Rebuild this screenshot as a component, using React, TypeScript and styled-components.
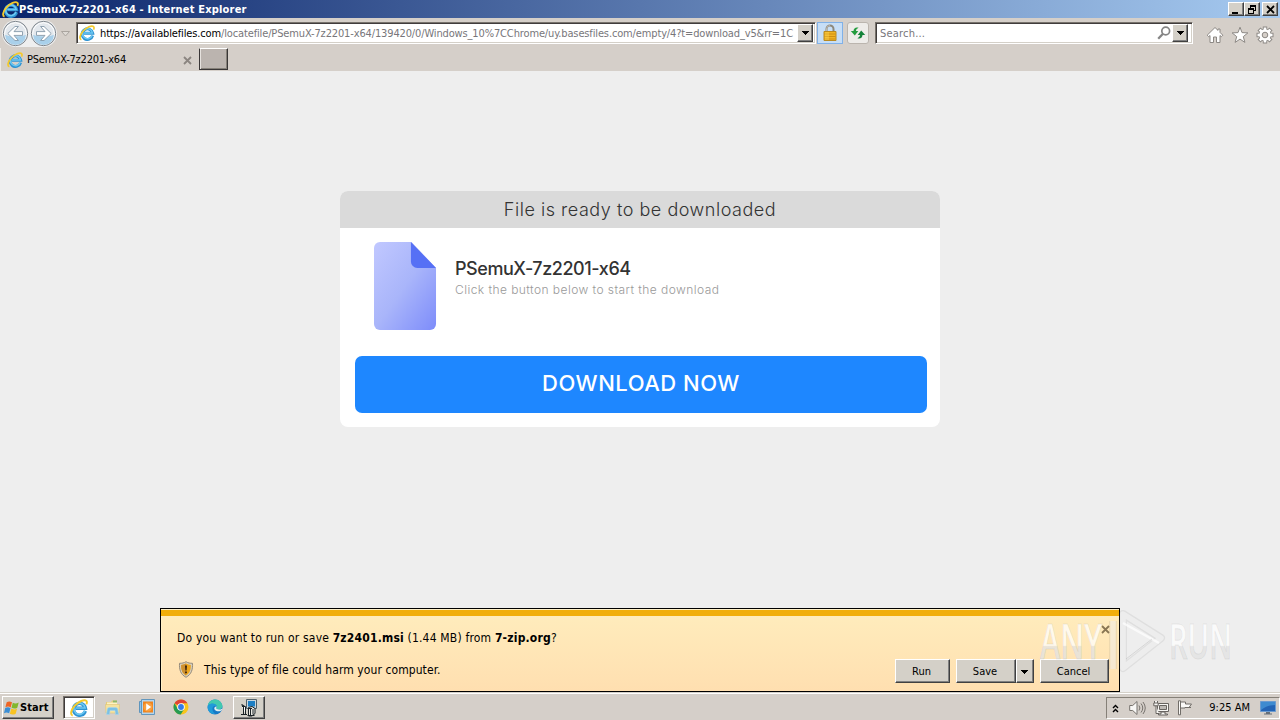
import type { ReactNode } from "react";
import styled, { createGlobalStyle, css } from "styled-components";

const theme = {
    face: "#d5cfc9",
    page: "#eeeeee",
    ui: `"DejaVu Sans Condensed", "DejaVu Sans", sans-serif`,
    web: `Inter, "Open Sans", sans-serif`,
};

const raised = css`
    border: 1px solid;
    border-color: #fff #404040 #404040 #fff;
    box-shadow: inset -1px -1px 0 #808080;
    background: #d4d0c8;
`;

const sunken = css`
    border: 1px solid;
    border-color: #77726c #fff #fff #77726c;
    box-shadow: inset 1px 1px 0 #403c3c, inset -1px -1px 0 #d4d0c8;
    background: #fff;
`;

const IeIcon = ({ size = 16 }: { size?: number }) => (
    <svg width={size} height={size} viewBox="0 0 16 16" fill="none">
        <path d="M13.6 10.6A5.3 5.3 0 1 1 13.7 8.2H5" stroke="#2f93d2" strokeWidth="3" />
        <path d="M13.2 10.2A5 5 0 1 1 13.4 8H5" stroke="#6cc8f2" strokeWidth="1.5" />
        <path d="M2.4 14.8C0 14 .8 9.900 4 6.200 7.600 2.100 12.800 0 14.600 1.700c.7.8.4 2-.1 3" stroke="#f4c92c" strokeWidth="1.700" />
    </svg>
);

const NavIcon = ({ back }: { back?: boolean }) => (
    <svg width="27" height="27" viewBox="0 0 27 27" fill="none">
        <circle cx="13.5" cy="13.5" r="12.2" fill="#e3e8ed" stroke="#7f868d" />
        <circle cx="13.5" cy="13.5" r="10.8" stroke="#fff" />
        <path d="M3 14.500a10.500 10.500 0 0 0 21 0c-3 2.500-18 2.500-21 0Z" fill="#a9d0ea" />
        <g transform={back ? undefined : "rotate(180 13.500 13.500)"}>
            <path
                d="M5.800 13.500 13 6.500h3.400L12 11.600h8.500v3.800H12l4.400 5.100H13Z"
                fill="#fff"
                stroke="#8599a9"
                strokeWidth=".9"
            />
        </g>
    </svg>
);

const LockIcon = () => (
    <svg width="14" height="18" viewBox="0 0 14 18">
        <path d="M3.500 8V5a3.500 3.500 0 0 1 7 0v3" fill="none" stroke="#8d887b" strokeWidth="2" />
        <path d="M3.500 8V5A3.500 3.500 0 0 1 7 1.500" fill="none" stroke="#d2cfc7" strokeWidth=".7" />
        <path d="M1 7.500h12v9H1z" fill="#f0b423" stroke="#b98a20" />
        <path d="M1.500 10h11M1.500 12.500h11M1.500 15h11" stroke="#cf8e14" />
        <path d="M3 8v8M5 8v8" stroke="#ffdc60" opacity=".7" />
    </svg>
);

const RefreshIcon = () => (
    <svg width="16" height="16" viewBox="0 0 16 16" fill="#249c3e">
        <path d="M8.6 2.8C6 1.8 3.7 3 3.5 6H.8l4 4.600L8.300 6H6c.1-1.500.8-2.400 2.600-3.200Z" />
        <path d="M7.400 13.200c2.600 1 4.900-.2 5.100-3.200h2.700l-4-4.600L7.700 10H10c-.1 1.500-.8 2.400-2.600 3.200Z" fill="#15833a" />
    </svg>
);

const SearchIcon = () => (
    <svg width="14" height="14" viewBox="0 0 14 14" fill="none" stroke="#858585">
        <circle cx="8.700" cy="5" r="3.900" strokeWidth="1.700" />
        <path d="m6 7.800-4.800 5" strokeWidth="2.300" />
    </svg>
);

const outline = { fill: "#fff", stroke: "#8c8884", strokeWidth: 1 };

const HomeIcon = () => (
    <svg width="18" height="18" viewBox="0 0 18 18" {...outline}>
        <path d="M9 1.500 1.200 9.200l1.500 1.500L4 9.500v7h3.500V11h3v5.500H14v-7l1.300 1.200 1.500-1.500-2.800-2.800V3h-2v1.400Z" />
    </svg>
);

const StarIcon = () => (
    <svg width="18" height="18" viewBox="0 0 18 18" {...outline}>
        <path d="m9 1.200 2 5.400 5.900.3-4.600 3.700 1.600 5.800L9 13.100l-4.900 3.300 1.600-5.800L1.100 6.900 7 6.600Z" />
    </svg>
);

const GearIcon = () => (
    <svg width="18" height="18" viewBox="0 0 18 18" fill="none">
        {[0, 45, 90, 135].map((angle) => (
            <path key={angle} d="M9 .5v17" stroke="#8c8884" strokeWidth="4.400" transform={`rotate(${angle} 9 9)`} />
        ))}
        <circle cx="9" cy="9" r="6.500" fill="#8c8884" />
        {[0, 45, 90, 135].map((angle) => (
            <path key={angle} d="M9 1.500v15" stroke="#fff" strokeWidth="2.600" transform={`rotate(${angle} 9 9)`} />
        ))}
        <circle cx="9" cy="9" r="5.700" fill="#fff" />
        <circle cx="9" cy="9" r="2.800" fill="#d5cfc9" stroke="#8c8884" />
    </svg>
);

const CloseGlyph = ({ color = "#8b8580", size = 9 }: { color?: string; size?: number }) => (
    <svg width={size} height={size} viewBox="0 0 9 9" stroke={color} strokeWidth="1.800">
        <path d="m1 1 7 7M8 1 1 8" />
    </svg>
);

const DownArrow = () => (
    <svg width="7" height="4" viewBox="0 0 7 4" shapeRendering="crispEdges">
        <path d="M0 0h7v1H0zM1 1h5v1H1zM2 2h3v1H2zM3 3h1v1H3z" />
    </svg>
);

const FileIcon = () => (
    <svg width="63" height="88" viewBox="0 0 64 88" preserveAspectRatio="none">
        <defs>
            <linearGradient id="sheet" x1="0" y1="0" x2="1" y2="1">
                <stop offset="0" stopColor="#c1c8ff" />
                <stop offset=".5" stopColor="#a9b5fa" />
                <stop offset="1" stopColor="#7d8cfa" />
            </linearGradient>
        </defs>
        <path d="M6 0h32l25 26v56a6 6 0 0 1-6 6H6a6 6 0 0 1-6-6V6a6 6 0 0 1 6-6Z" fill="url(#sheet)" />
        <path d="M37.500 0 63 26H44a6.500 6.500 0 0 1-6.500-6.500Z" fill="#5670f5" />
    </svg>
);

const ShieldIcon = () => (
    <svg width="16" height="17" viewBox="0 0 16 17">
        <path d="M8 .7c2 1.300 4 1.600 6.500 1.600.3 6.500-1 11-6.500 14C2.500 13.300 1.200 8.800 1.500 2.300 4 2.300 6 2 8 .7Z" fill="#d8cfbc" stroke="#958b7b" />
        <path d="M8 2.600c1.600.9 3 1.300 4.800 1.300.1 5-1 8-4.800 10.500C4.200 11.900 3.100 8.900 3.200 3.900 5 3.900 6.400 3.500 8 2.600Z" fill="#eda51b" />
        <path d="M8 2.600c-1.600.9-3 1.300-4.800 1.300-.1 5 1 8 4.800 10.500Z" fill="#cf9130" />
        <path d="M7 4.500h2L8.600 9.500H7.400ZM7.100 10.500h1.800v1.800H7.100z" fill="#38210b" />
    </svg>
);

const WindowsIcon = () => (
    <svg width="16" height="16" viewBox="0 0 16 16">
        <path d="M2.700 2.200C4.600 1 6.200 1.200 8 2.300L6.700 7.400C5 6.300 3.300 6.300 1.400 7.300Z" fill="#ee6525" />
        <path d="M8.800 2.700c1.800 1.100 3.600 1.100 5.900-.2l-1.400 5.200c-2 1.200-3.800 1.200-5.800.1Z" fill="#82b72d" />
        <path d="M1.200 8.100c1.900-1 3.600-1 5.300.1l-1.400 5.100C3.400 12.200 1.800 12.200 0 13.200Z" fill="#3b8ed5" />
        <path d="M7.300 8.600c2 1.100 3.800 1.100 5.800-.1l-1.400 5.200c-2 1.200-3.800 1.200-5.800.1Z" fill="#f8c321" />
    </svg>
);

const ExplorerIcon = () => (
    <svg width="17" height="16" viewBox="0 0 17 16">
        <path d="M2 3h5l1-1.500h5V13H2Z" fill="#e3cc7c" />
        <path d="M9 1.500h4v3H9z" fill="#8fb86b" />
        <path d="M3 3.500h10v3H3z" fill="#fff3c2" />
        <path d="M1.500 5.500h14l-.5 8.500H2Z" fill="#f5e3a0" stroke="#dfc273" strokeWidth=".6" />
        <path d="M2.500 15.500 3.300 10q.2-1.500 2-1.500h6.400q1.800 0 2 1.500l.8 5.500h-3l-.5-4H6l-.5 4Z" fill="#7cc0e4" stroke="#a8d7ee" strokeWidth=".6" />
    </svg>
);

const PlayerIcon = () => (
    <svg width="16" height="16" viewBox="0 0 16 16">
        <path d="M.5 2.500h3v11h-3z" fill="#8fc3ea" stroke="#5e95bd" />
        <path d="M2.500.5h13v15h-13z" fill="#b5d5ed" stroke="#6397bd" />
        <path d="M4 2.500h10v11H4z" fill="#f0841d" />
        <circle cx="9" cy="8" r="4.500" fill="#f9a040" />
        <path d="m7.200 4.600 5 3.400-5 3.400Z" fill="#fff" />
    </svg>
);

const ChromeIcon = () => (
    <svg width="16" height="16" viewBox="0 0 16 16">
        <circle cx="8" cy="8" r="7.500" fill="#f8c51c" />
        <path d="M8 8 1.500 4.200A7.500 7.500 0 0 1 14.500 4.300H8Z" fill="#df4435" />
        <path d="M1.500 4.200A7.500 7.500 0 0 0 7.700 15.500L11.200 9.900 8 8 4.800 9.900Z" fill="#269b53" />
        <circle cx="8" cy="8" r="3.800" fill="#fff" />
        <circle cx="8" cy="8" r="2.900" fill="#337ce8" />
    </svg>
);

const EdgeIcon = () => (
    <svg width="16" height="16" viewBox="0 0 16 16">
        <circle cx="8" cy="8" r="7.500" fill="#1679c6" />
        <path d="M.8 6.800C2-.8 12.800-1.800 15.300 6c.8 3.800-2.500 5.500-5.800 4-1-.5.500-1 .3-2.400C9.400 4.200 3.400 3.600.8 6.800Z" fill="#42c9b0" />
        <path d="M1 6.500C4 3.400 9.200 4.400 9.800 7.500 5.400 5.500 3.600 11 8 14.900 3 15.800-.3 11 1 6.500Z" fill="#209bd9" />
        <path d="M9.700 7.500c-.2 1.400-.9 1.700-.2 2.300 1.500 1.200 4.100.9 5.300-.1l.3 1c-1.800 2-5.200 2.200-7.200.2-1.300-1.600-.3-3.400 1.800-3.400Z" fill="#e1eeef" />
    </svg>
);

const InstallerIcon = () => (
    <svg width="18" height="18" viewBox="0 0 18 18" fill="none" stroke="#1b2226">
        <path d="M6.500.5h10v9h-10z" fill="#c9d6dd" stroke="#50606a" />
        <path d="M8 2h7v5.500H8z" fill="#1d7fc4" stroke="none" />
        <path d="M2 7.500h3.500v7.500M1 15.500h6" fill="#fff" />
        <path d="M8.500 8.500 12 7.500l3 2v5l-3 2.500H8.500Z" fill="#eceae4" />
        <path d="M3.500 8v7M8 9.500h4M10.500 10v6M13 10v5.500M7.500 16.500h7" />
        <path d="m1.500 5.500 3 2" strokeWidth="1.500" />
    </svg>
);

const VolumeIcon = () => (
    <svg width="17" height="16" viewBox="0 0 17 16" fill="none" stroke="#77736e">
        <path d="M.7 5.500h3L8 1.500v13l-4.300-4h-3Z" fill="#f8f7f5" />
        <path d="M10 5.500q1.800 2.500 0 5M12 3.500q3.500 4.500 0 9M14 2q4.500 6 0 12" />
    </svg>
);

const NetworkIcon = () => (
    <svg width="17" height="16" viewBox="0 0 17 16" fill="#f7f6f3" stroke="#686460">
        <path d="M4.500 3.500h11v8h-11z" />
        <path d="M6.500 5.500h7v4h-7z" fill="#bdb9b4" />
        <path d="M8 12h4v2h2.500v1h-9v-1H8zM1.500 1v4.500h3V1M3 5.500v8h3" />
        <path d="M.8 3h4.400v2.800H.8z" />
    </svg>
);

const FlagIcon = () => (
    <svg width="16" height="16" viewBox="0 0 16 16" fill="#faf9f7" stroke="#716d68">
        <path d="M1.500.8h2v14h-2zM3.500 2h5v2h6l-2.500 3.500 2 0H8V8H3.500Z" />
    </svg>
);

const DesktopIcon = () => (
    <svg width="16" height="14" viewBox="0 0 16 14">
        <path d="M.5.5h15v10H.5z" fill="#2464b5" stroke="#6c9bd0" />
        <path d="M1 1h14v3Q7 4 1 9Z" fill="#3f8bd0" />
        <path d="M6 11h4v1.500H6zM4 12.500h8v1H4z" fill="#656e78" />
    </svg>
);

const Brand = () => (
    <svg width="200" height="66" viewBox="0 0 200 66">
        <defs>
            <linearGradient id="brand" x1="0" y1="0" x2="0" y2="1">
                <stop offset="0.580" stopColor="#fff" stopOpacity=".72" />
                <stop offset="0.600" stopColor="#e2e2e2" stopOpacity=".75" />
            </linearGradient>
        </defs>
        <BrandText>
            <text x="3" y="51" textLength="62" lengthAdjust="spacingAndGlyphs">ANY</text>
            <text x="132" y="51" textLength="63" lengthAdjust="spacingAndGlyphs">RUN</text>
        </BrandText>
        <g fill="none" strokeLinejoin="round">
            <path d="M76 13v48M86 6l38 24-38 30Z" stroke="#777" strokeOpacity=".12" strokeWidth="8" />
            <path d="M76 13v48M86 6l38 24-38 30Z" stroke="#fff" strokeOpacity=".45" strokeWidth="5.500" />
            <path d="M86 15l36 20" stroke="#fff" strokeOpacity=".7" strokeWidth="2.500" />
            <path d="M89 51l26-20" stroke="#aaa" strokeOpacity=".35" />
        </g>
    </svg>
);

const Label = ({ children, spacing = 0, bold }: { children: ReactNode; spacing?: number; bold?: boolean }) => (
    <UiText $spacing={spacing} $bold={bold}>{children}</UiText>
);

const App = () => {
    return (
        <Desktop>
            <GlobalStyle />
            <TitleBar>
                <IeIcon size={17} />
                <Label bold spacing={0.19}>PSemuX-7z2201-x64 - Internet Explorer</Label>
                <WindowButtons>
                    <WindowButton>
                        <svg width="10" height="9"><path d="M1 7h6v2H1z" /></svg>
                    </WindowButton>
                    <WindowButton>
                        <svg width="10" height="9" shapeRendering="crispEdges">
                            <path d="M3 0h6v6H7V5h1V2H4v1H3zM1 3h6v6H1zM2 5v3h4V5z" fillRule="evenodd" />
                        </svg>
                    </WindowButton>
                    <WindowButton $last>
                        <CloseGlyph color="#000" />
                    </WindowButton>
                </WindowButtons>
            </TitleBar>

            <NavBar>
                <HistoryButtons>
                    <NavIcon back />
                    <NavIcon />
                </HistoryButtons>
                <HistoryMenu width="9" height="6" viewBox="0 0 9 6">
                    <path d="M.5.5h8l-4 4.500Z" fill="#dedad5" stroke="#aaa59f" />
                </HistoryMenu>
                <AddressField>
                    <IeIcon />
                    <Url>
                        <Label spacing={-0.14}>
                            <Host>https://availablefiles.com</Host>
                            /locatefile/PSemuX-7z2201-x64/139420/0/Windows_10%7CChrome/uy.basesfiles.com/empty/4?t=download_v5&rr=1C
                        </Label>
                    </Url>
                    <DropButton><DownArrow /></DropButton>
                </AddressField>
                <LockButton><LockIcon /></LockButton>
                <RefreshButton><RefreshIcon /></RefreshButton>
                <SearchField>
                    <Label spacing={0.2}>Search...</Label>
                    <SearchIcon />
                    <DropButton><DownArrow /></DropButton>
                </SearchField>
                <Tools>
                    <HomeIcon />
                    <StarIcon />
                    <GearIcon />
                </Tools>
            </NavBar>

            <TabBar>
                <Tab>
                    <IeIcon />
                    <Label spacing={-0.22}>PSemuX-7z2201-x64</Label>
                    <CloseGlyph />
                </Tab>
                <NewTab />
            </TabBar>

            <Page>
                <Card>
                    <CardHeader><span>File is ready to be downloaded</span></CardHeader>
                    <FileInfo>
                        <FileIcon />
                        <div>
                            <FileName>PSemuX-7z2201-x64</FileName>
                            <Hint>Click the button below to start the download</Hint>
                        </div>
                    </FileInfo>
                    <DownloadButton>DOWNLOAD NOW</DownloadButton>
                </Card>

                <Notice>
                    <NoticeText>
                        <Question>
                            Do you want to run or save <b>7z2401.msi</b> (1.44 MB) from <b>7-zip.org</b>?
                        </Question>
                        <Warning>
                            <ShieldIcon />
                            <span>This type of file could harm your computer.</span>
                        </Warning>
                    </NoticeText>
                    <NoticeSide>
                        <CloseGlyph color="#897653" />
                        <Actions>
                            <ActionButton $width={55}>Run</ActionButton>
                            <SplitButton>
                                <ActionButton $width={60}>Save</ActionButton>
                                <ActionButton $width={18}><DownArrow /></ActionButton>
                            </SplitButton>
                            <ActionButton $width={69}>Cancel</ActionButton>
                        </Actions>
                    </NoticeSide>
                </Notice>
                <Watermark><Brand /></Watermark>
            </Page>

            <TaskBar>
                <StartButton>
                    <WindowsIcon />
                    <Label bold spacing={0.1}>Start</Label>
                </StartButton>
                <TaskButton $pressed><IeIcon size={18} /></TaskButton>
                <QuickLaunch>
                    <ExplorerIcon />
                    <PlayerIcon />
                    <ChromeIcon />
                    <EdgeIcon />
                </QuickLaunch>
                <TaskButton><InstallerIcon /></TaskButton>
                <Tray>
                    <svg width="7" height="9" fill="none" stroke="#000" strokeWidth="1.400">
                        <path d="m1 4 2.500-2.500L6 4M1 8l2.500-2.500L6 8" />
                    </svg>
                    <TrayIcons>
                        <VolumeIcon />
                        <NetworkIcon />
                        <FlagIcon />
                    </TrayIcons>
                    <Clock><Label>9:25 AM</Label></Clock>
                    <DesktopIcon />
                </Tray>
            </TaskBar>
        </Desktop>
    );
};

const GlobalStyle = createGlobalStyle`
    * {
        box-sizing: border-box;
    }

    body {
        margin: 0;
        overflow: hidden;
    }

    svg {
        display: block;
        flex-shrink: 0;
    }

    button {
        padding: 0;
        font: inherit;
        color: inherit;
    }
`;

const Desktop = styled.div`
    width: 1280px;
    height: 720px;
    display: flex;
    flex-direction: column;
    background: ${theme.face};
    font: 11px/14px ${theme.ui};
    color: #000;
`;

const UiText = styled.span<{ $spacing: number; $bold?: boolean }>`
    display: block;
    white-space: nowrap;
    letter-spacing: ${({ $spacing }) => $spacing}px;
    font-weight: ${({ $bold }) => ($bold ? 700 : 400)};
`;

const TitleBar = styled.header`
    height: 18px;
    display: flex;
    align-items: center;
    padding: 0 2px;
    color: #fff;
    background: linear-gradient(90deg, #0a246a, #a6caf0);

    ${UiText} {
        padding-top: 2px;
    }
`;

const WindowButtons = styled.div`
    display: flex;
    margin-left: auto;
`;

const WindowButton = styled.button<{ $last?: boolean }>`
    ${raised}
    width: 16px;
    height: 14px;
    display: grid;
    place-items: center;
    color: #000;
    margin-left: ${({ $last }) => ($last ? 2 : 0)}px;
`;

const NavBar = styled.nav`
    height: 30px;
    display: flex;
    align-items: flex-start;
    padding: 4px 6px 0 2px;
`;

const HistoryButtons = styled.div`
    display: flex;
    gap: 1px;
    height: 27px;
    margin-top: -2px;
    border-radius: 14px;
    background: #efefef;
`;

const HistoryMenu = styled.svg`
    margin: 9px 6px 0 4px;
`;

const AddressField = styled.div`
    ${sunken}
    width: 740px;
    height: 22px;
    display: flex;
    align-items: center;
    padding: 1px 2px 1px 2px;
    color: #77767a;
`;

const Url = styled.div`
    flex: 1;
    min-width: 0;
    margin: 0 2px 0 5px;
    padding-top: 2px;
    overflow: hidden;
`;

const Host = styled.span`
    color: #000;
`;

const DropButton = styled.button`
    ${raised}
    width: 16px;
    height: 18px;
    display: grid;
    place-items: center;
`;

const LockButton = styled.button`
    width: 26px;
    height: 22px;
    display: grid;
    place-items: center;
    margin-left: 1px;
    border: 1px solid #80b1e8;
    background: #c7def6;
`;

const RefreshButton = styled.button`
    width: 22px;
    height: 22px;
    display: grid;
    place-items: center;
    margin-left: 4px;
    border: 1px solid #bbb5ae;
    border-radius: 3px;
    background: #eeece9;
`;

const SearchField = styled.div`
    ${sunken}
    width: 318px;
    height: 22px;
    display: flex;
    align-items: center;
    gap: 1px;
    margin-left: 6px;
    padding: 1px 4px;
    color: #77767a;

    ${UiText} {
        padding-top: 2px;
        margin-right: auto;
    }
`;

const Tools = styled.div`
    display: flex;
    gap: 7px;
    margin: 4px 0 0 auto;
`;

const TabBar = styled.div`
    height: 23px;
    display: flex;
    gap: 1px;
`;

const Tab = styled.div`
    width: 198px;
    height: 23px;
    display: flex;
    align-items: center;
    gap: 4px;
    padding: 1px 6px 0;
    border-left: 1px solid #eeebe6;

    svg:last-child {
        margin-left: auto;
    }
`;

const NewTab = styled.button`
    width: 29px;
    height: 22px;
    border: 1px solid #393636;
    border-top-color: #fff;
    box-shadow: inset 1px 0 #e6e2de, inset -1px -1px #858078;
    background: #bbb4af;
`;

const Page = styled.main`
    position: relative;
    height: 621px;
    padding-top: 120px;
    background: ${theme.page};
    font-family: ${theme.web};
`;

const Card = styled.section`
    width: 600px;
    height: 236px;
    margin: 0 auto;
    border-radius: 8px;
    overflow: hidden;
    background: #fff;
`;

const CardHeader = styled.h1`
    height: 37px;
    margin: 0;
    text-align: center;
    font-size: 18px;
    line-height: 37px;
    font-weight: 300;
    letter-spacing: 0.53px;
    color: #333;
    background: #dadada;
`;

const FileInfo = styled.div`
    height: 128px;
    display: flex;
    gap: 18px;
    padding: 14px 34px 0;
`;

const FileName = styled.h2`
    margin: 15px 0 0;
    font-size: 18px;
    line-height: 24px;
    font-weight: 500;
    letter-spacing: -0.44px;
    white-space: nowrap;
    color: #333;
`;

const Hint = styled.p`
    margin: 1px 0 0;
    font-size: 12px;
    line-height: 16px;
    font-weight: 300;
    letter-spacing: 0.44px;
    white-space: nowrap;
    color: #999;
`;

const DownloadButton = styled.button`
    && {
        display: block;
        width: 572px;
        height: 57px;
        margin-left: 15px;
        padding-bottom: 4px;
        border: 0;
        border-radius: 7px;
        font-size: 22px;
        font-weight: 500;
        letter-spacing: 0.5px;
        color: #fff;
        background: #1e87ff;
    }
`;

const Notice = styled.aside`
    position: absolute;
    left: 160px;
    bottom: 0;
    width: 960px;
    height: 84px;
    display: flex;
    justify-content: space-between;
    border: 1px solid #000;
    box-shadow: inset 0 1px #fff0c6, inset 0 7px #f1ae0b, inset 1px 0 #fff0c6;
    background: linear-gradient(#ffedbd, #ffdfb0);
    font: 12px/16px ${theme.ui};
`;

const NoticeText = styled.div`
    padding: 21px 0 0 16px;
`;

const Question = styled.div`
    white-space: nowrap;
    letter-spacing: 0.19px;
`;

const Warning = styled.div`
    display: flex;
    align-items: center;
    gap: 10px;
    margin: 15px 0 0 1px;
    letter-spacing: 0.08px;
`;

const NoticeSide = styled.div`
    display: flex;
    flex-direction: column;
    align-items: flex-end;
    justify-content: space-between;
    padding: 16px 9px 8px 0;
`;

const Actions = styled.div`
    display: flex;
    gap: 6px;
    margin-right: 1px;
`;

const SplitButton = styled.div`
    display: flex;
`;

const ActionButton = styled.button<{ $width: number }>`
    && {
        ${raised}
        width: ${({ $width }) => $width}px;
        height: 24px;
        display: grid;
        place-items: center;
        padding: 1px 2px 0 0;
        font: 11px/14px ${theme.ui};
    }
`;

const Watermark = styled.div`
    position: absolute;
    left: 1037px;
    bottom: 18px;
`;

const BrandText = styled.g`
    font: 600 49px "Open Sans", sans-serif;
    fill: url(#brand);
    stroke: #888;
    stroke-opacity: 0.16;
    stroke-width: 1px;
`;

const TaskBar = styled.footer`
    height: 28px;
    display: flex;
    align-items: flex-start;
    padding: 3px 0 0 2px;
    border-top: 1px solid #d4d0c8;
    box-shadow: inset 0 1px #fff;
`;

const StartButton = styled.button`
    ${raised}
    width: 52px;
    height: 23px;
    display: flex;
    align-items: center;
    padding: 0 2px 0 1px;
    margin-right: 9px;
`;

const TaskButton = styled.button<{ $pressed?: boolean }>`
    ${({ $pressed }) => ($pressed ? sunken : raised)}
    width: 32px;
    height: 23px;
    display: grid;
    place-items: center;
`;

const QuickLaunch = styled.div`
    display: flex;
    gap: 18px;
    padding: 3px 10px 0 9px;
`;

const Tray = styled.div`
    width: 174px;
    height: 22px;
    display: flex;
    align-items: center;
    margin: 1px 0 0 auto;
    padding: 0 3px 0 5px;
    border: 1px solid;
    border-color: #858078 #fff #fff #858078;
`;

const TrayIcons = styled.div`
    display: flex;
    gap: 7px;
    margin-left: 10px;
`;

const Clock = styled.time`
    margin: 0 10px 0 auto;
`;

export default App;
